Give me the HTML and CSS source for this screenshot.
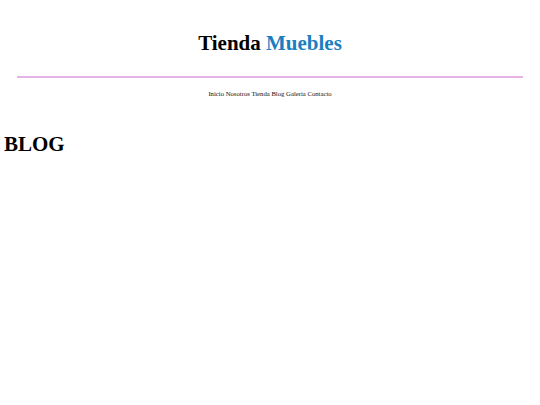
FILE: index.html
```html
<!DOCTYPE html>
<html lang="es">
<head>
<meta charset="utf-8">
<title>Blog - Tienda Muebles</title>
<link rel="stylesheet" href="styles.css">
</head>
<body>
<header class="header">
  <h1 class="logo">Tienda <span class="logo-accent">Muebles</span></h1>
  <hr class="divider">
  <nav class="nav">
    <a href="#">Inicio</a>
    <a href="#">Nosotros</a>
    <a href="#">Tienda</a>
    <a href="#">Blog</a>
    <a href="#">Galeria</a>
    <a href="#">Contacto</a>
  </nav>
</header>
<main class="content">
  <h2 class="page-title">BLOG</h2>
</main>
</body>
</html>
```
FILE: styles.css
```css
html, body {
  margin: 0;
  padding: 0;
  background: #ffffff;
  color: #000000;
  font-family: "Liberation Serif", "Times New Roman", serif;
}
.header {
  padding-top: 30px;
}
.logo {
  margin: 0;
  text-align: center;
  font-size: 21px;
  font-weight: bold;
  line-height: 26px;
}
.logo-accent {
  color: #1a7fc1;
}
.divider {
  margin: 20px 17px 0;
  border: 0;
  border-top: 2px solid #e6b3e6;
  height: 0;
}
.nav {
  margin-top: 11px;
  text-align: center;
  font-size: 6.7px;
  line-height: 10px;
  -webkit-font-smoothing: antialiased;
}
.nav a {
  color: #111111;
  text-decoration: none;
}
.content {
  padding: 0 4px;
}
.page-title {
  margin: 32px 0 0;
  font-size: 21px;
  font-weight: bold;
  line-height: 26px;
}
```
